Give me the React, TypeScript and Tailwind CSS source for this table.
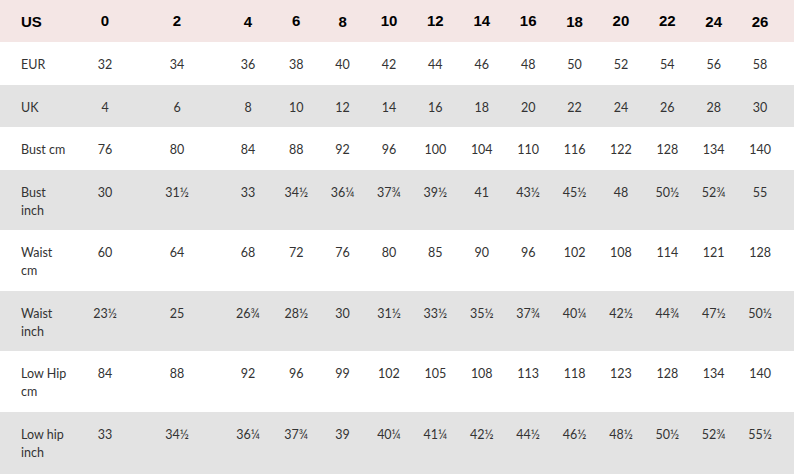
const sizes = ["0", "2", "4", "6", "8", "10", "12", "14", "16", "18", "20", "22", "24", "26"];

const rows = [
  { label: ["EUR"], h: "h-[43px]", bg: "bg-white", values: ["32", "34", "36", "38", "40", "42", "44", "46", "48", "50", "52", "54", "56", "58"] },
  { label: ["UK"], h: "h-[42px]", bg: "bg-[#e3e3e3]", values: ["4", "6", "8", "10", "12", "14", "16", "18", "20", "22", "24", "26", "28", "30"] },
  { label: ["Bust cm"], h: "h-[43px]", bg: "bg-white", values: ["76", "80", "84", "88", "92", "96", "100", "104", "110", "116", "122", "128", "134", "140"] },
  { label: ["Bust", "inch"], h: "h-[60px]", bg: "bg-[#e3e3e3]", values: ["30", "31½", "33", "34½", "36¼", "37¾", "39½", "41", "43½", "45½", "48", "50½", "52¾", "55"] },
  { label: ["Waist", "cm"], h: "h-[61px]", bg: "bg-white", values: ["60", "64", "68", "72", "76", "80", "85", "90", "96", "102", "108", "114", "121", "128"] },
  { label: ["Waist", "inch"], h: "h-[60px]", bg: "bg-[#e3e3e3]", values: ["23½", "25", "26¾", "28½", "30", "31½", "33½", "35½", "37¾", "40¼", "42½", "44¾", "47½", "50½"] },
  { label: ["Low Hip", "cm"], h: "h-[61px]", bg: "bg-white", values: ["84", "88", "92", "96", "99", "102", "105", "108", "113", "118", "123", "128", "134", "140"] },
  { label: ["Low hip", "inch"], h: "h-[62px]", bg: "bg-[#e3e3e3]", values: ["33", "34½", "36¼", "37¾", "39", "40¼", "41¼", "42½", "44½", "46½", "48½", "50½", "52¾", "55½"] },
];

// header digits sit a little unevenly in the source image
const headerNudge = ["pt-0", "pt-0", "pt-[3px]", "pt-[1px]", "pt-[2px]", "pt-[1px]", "pt-0", "pt-[1px]", "pt-[1px]", "pt-[2px]", "pt-[1px]", "pt-[1px]", "pt-[2px]", "pt-[3px]"];

const cols = "grid grid-cols-[79px_52px_92px_50px_repeat(11,46.4px)_1fr]";

export default function App() {
  return (
    <div className="w-[794px] h-[474px] overflow-hidden bg-white">
      <div className={`${cols} h-[42px] bg-[#f4e6e5] items-center text-[15px] font-bold text-black font-['Liberation_Sans',Arial,sans-serif]`}>
        <div className="pl-[21px] pt-[2px]">US</div>
        {sizes.map((s, i) => (
          <div key={s} className={`text-center ${headerNudge[i]}`}>
            {s}
          </div>
        ))}
        <div />
      </div>

      {rows.map((row) => (
        <div
          key={row.label.join(" ")}
          className={`${cols} ${row.h} ${row.bg} pt-[14px] text-[12.5px] leading-[18px] text-[#333333] font-['Lato','Open_Sans',sans-serif]`}
        >
          <div className="pl-[21px]">
            {row.label.map((l) => (
              <div key={l} className="whitespace-nowrap">
                {l}
              </div>
            ))}
          </div>
          {row.values.map((v, i) => (
            <div key={i} className="text-center">
              {v}
            </div>
          ))}
          <div />
        </div>
      ))}
    </div>
  );
}
